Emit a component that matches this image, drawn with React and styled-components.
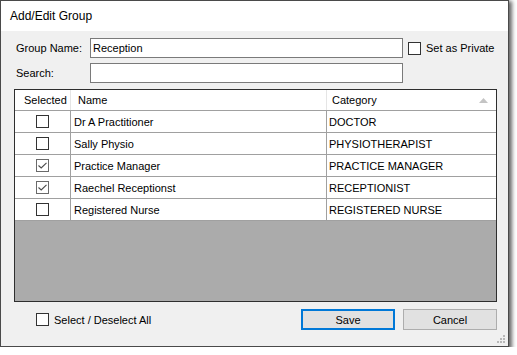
import React from 'react';
import styled, { createGlobalStyle } from 'styled-components';

const GlobalStyle = createGlobalStyle`
  body {
    margin: 0;
    background: #ffffff;
    font-family: "Liberation Sans", Arial, sans-serif;
  }
`;

const people = [
  { name: 'Dr A Practitioner', category: 'DOCTOR', selected: false },
  { name: 'Sally Physio', category: 'PHYSIOTHERAPIST', selected: false },
  { name: 'Practice Manager', category: 'PRACTICE MANAGER', selected: true },
  { name: 'Raechel Receptionst', category: 'RECEPTIONIST', selected: true },
  { name: 'Registered Nurse', category: 'REGISTERED NURSE', selected: false },
];

const Window = styled.div`
  position: relative;
  box-sizing: border-box;
  width: 509px;
  height: 347px;
  border: 1px solid #4a4a4a;
  background: #f0f0f0;
  box-shadow: 2px 2px 4px 1px rgba(0, 0, 0, 0.6);
  display: flex;
  flex-direction: column;
`;

const TitleBar = styled.div`
  height: 30px;
  background: #ffffff;
  display: flex;
  align-items: center;
  padding-left: 9px;
  font-size: 12px;
  color: #000;
`;

const Body = styled.div`
  flex: 1;
  display: flex;
  flex-direction: column;
  padding: 7px 11px 0 13px;
`;

const FieldRow = styled.div`
  display: flex;
  align-items: center;
  height: 20px;
  margin-bottom: ${(p) => p.gap || 0}px;
`;

const Label = styled.label`
  width: 74px;
  padding-left: 2px;
  font-size: 11px;
  color: #000;
`;

const TextBox = styled.div`
  box-sizing: border-box;
  width: 313px;
  height: 20px;
  border: 1px solid #7a7a7a;
  background: #fff;
  font-size: 11px;
  display: flex;
  align-items: center;
  padding-left: 2px;
`;

const Check = styled.span`
  box-sizing: border-box;
  display: inline-flex;
  align-items: center;
  justify-content: center;
  width: 13px;
  height: 13px;
  background: #fff;
  border: 1px solid ${(p) => (p.checked ? '#6a6a6a' : '#333333')};
  flex-shrink: 0;
`;

const CheckLabel = styled.span`
  display: inline-flex;
  align-items: center;
  gap: 5px;
  margin-left: ${(p) => p.offset || 0}px;
  font-size: 11px;
  color: #000;
`;

const Grid = styled.div`
  box-sizing: border-box;
  height: 213px;
  margin-top: 6px;
  border: 1px solid #2e2e2e;
  background: #ababab;
  display: flex;
  flex-direction: column;
`;

const Row = styled.div`
  display: grid;
  grid-template-columns: 56px 256px 1fr;
  height: ${(p) => (p.header ? 20 : 22)}px;
  box-sizing: border-box;
  background: #fff;
  border-top: ${(p) => (p.header ? 'none' : '1px solid #a0a0a0')};
  border-bottom: ${(p) => (p.last ? '1px solid #a0a0a0' : 'none')};
  ${(p) => (p.last ? 'height: 23px;' : '')}
`;

const Cell = styled.div`
  display: flex;
  align-items: center;
  justify-content: ${(p) => (p.center ? 'center' : 'flex-start')};
  padding-left: ${(p) => p.pad || 0}px;
  border-right: ${(p) => (p.divider ? `1px solid ${p.divider}` : 'none')};
  font-size: 11px;
  color: #000;
  white-space: nowrap;
  overflow: hidden;
`;

const HeaderCell = styled(Cell)`
  justify-content: space-between;
  padding-right: 8px;
`;

const Footer = styled.div`
  display: flex;
  align-items: center;
  height: 21px;
  margin-top: 7px;
`;

const Spacer = styled.div`
  flex: 1;
`;

const Button = styled.button`
  box-sizing: border-box;
  width: 94px;
  height: 21px;
  margin-left: ${(p) => p.offset || 0}px;
  background: #e1e1e1;
  border: ${(p) => (p.focused ? '2px solid #0078d7' : '1px solid #adadad')};
  font-family: "Liberation Sans", Arial, sans-serif;
  font-size: 11px;
  color: #000;
  padding: 0;
`;

const Grip = styled.svg`
  position: absolute;
  right: 3px;
  bottom: 3px;
`;

const CheckBox = ({ checked }) => (
  <Check checked={checked}>
    {checked && (
      <svg width="9" height="7" viewBox="0 0 9 7">
        <path d="M0.5 3.5 L3.2 6 L8.5 0.8" fill="none" stroke="#4a4a4a" strokeWidth="1.1" />
      </svg>
    )}
  </Check>
);

export default function App() {
  return (
    <>
      <GlobalStyle />
      <Window>
        <TitleBar>Add/Edit Group</TitleBar>
        <Body>
          <FieldRow gap={5}>
            <Label>Group Name:</Label>
            <TextBox>Reception</TextBox>
            <CheckLabel offset={5}>
              <CheckBox />
              Set as Private
            </CheckLabel>
          </FieldRow>
          <FieldRow>
            <Label>Search:</Label>
            <TextBox />
          </FieldRow>
          <Grid>
            <Row header>
              <Cell pad={9} divider="#e5e5e5">Selected</Cell>
              <Cell pad={7} divider="#e5e5e5">Name</Cell>
              <HeaderCell pad={5}>
                Category
                <svg width="9" height="5" viewBox="0 0 9 5">
                  <path d="M0 5 L4.5 0 L9 5 Z" fill="#c4c4c4" />
                </svg>
              </HeaderCell>
            </Row>
            {people.map((p, i) => (
              <Row key={p.name} last={i === people.length - 1}>
                <Cell center divider="#a0a0a0">
                  <CheckBox checked={p.selected} />
                </Cell>
                <Cell pad={3} divider="#a0a0a0">{p.name}</Cell>
                <Cell pad={2}>{p.category}</Cell>
              </Row>
            ))}
          </Grid>
          <Footer>
            <CheckLabel offset={22}>
              <CheckBox />
              Select / Deselect All
            </CheckLabel>
            <Spacer />
            <Button focused>Save</Button>
            <Button offset={8}>Cancel</Button>
          </Footer>
        </Body>
        <Grip width="8" height="8" viewBox="0 0 8 8">
          <rect x="6" y="0" width="2" height="2" fill="#b8b8b8" />
          <rect x="3" y="3" width="2" height="2" fill="#b8b8b8" />
          <rect x="6" y="3" width="2" height="2" fill="#b8b8b8" />
          <rect x="0" y="6" width="2" height="2" fill="#b8b8b8" />
          <rect x="3" y="6" width="2" height="2" fill="#b8b8b8" />
          <rect x="6" y="6" width="2" height="2" fill="#b8b8b8" />
        </Grip>
      </Window>
    </>
  );
}
